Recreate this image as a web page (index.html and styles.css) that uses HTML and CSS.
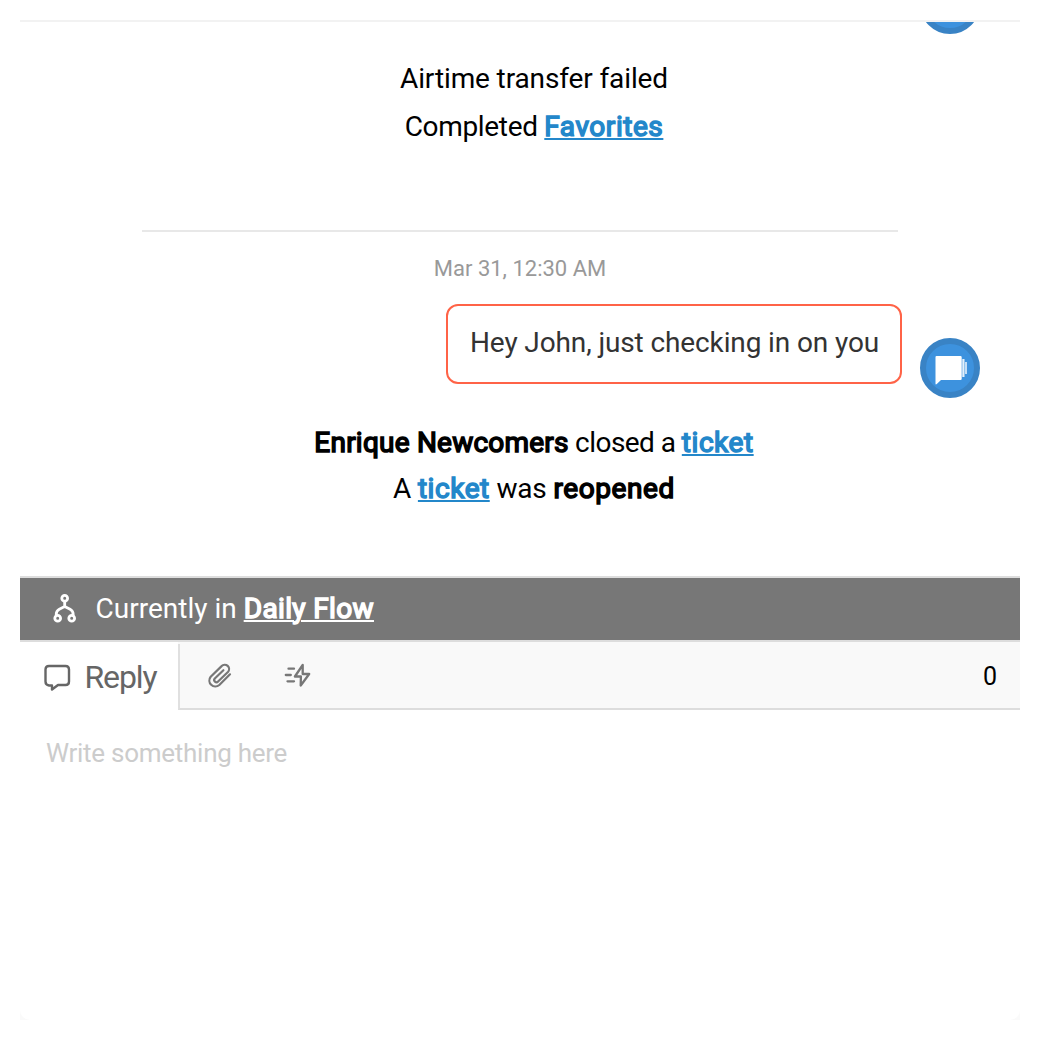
FILE: index.html
```
<!DOCTYPE html>
<html lang="en">
<head>
<meta charset="utf-8">
<title>Chat</title>
<link rel="stylesheet" href="styles.css">
</head>
<body>
<main class="chat">
  <section class="history">
    <div class="avatar avatar-clipped"></div>
    <p class="event failed"><span>Airtime transfer failed</span></p>
    <p class="event completed"><span>Completed <a>Favorites</a></span></p>
    <div class="divider"></div>
    <time class="time">Mar 31, 12:30 AM</time>
    <div class="message">
      <div class="bubble"><span>Hey John, just checking in on you</span></div>
      <div class="avatar">
        <svg viewBox="0 0 60 60" width="60" height="60">
          <path d="M42.300 21h2.200v18h-2.200z" fill="#e4f0fb"/>
          <path d="M44.900 24h2.100v12h-2.100z" fill="#c4def6"/>
          <path d="M15.500 19q0-1 1-1h24q1.200 0 1.200 1.200v21.600q0 1.200-1.200 1.200H21l-4.200 4q-1.300 1-1.300-.500z" fill="#fff"/>
        </svg>
      </div>
    </div>
    <p class="event closed"><span><b>Enrique Newcomers</b> closed a <a>ticket</a></span></p>
    <p class="event reopened"><span>A <a>ticket</a> was <b>reopened</b></span></p>
  </section>
  <section class="flow">
    <svg class="flow-icon" viewBox="0 0 24 30" width="24" height="30" fill="none" stroke="#fff" stroke-width="2.800" stroke-linecap="round">
      <circle cx="11.700" cy="4.300" r="2.900"/><circle cx="4.700" cy="24.300" r="2.900"/><circle cx="18.700" cy="24.300" r="2.900"/>
      <path d="M11.700 8v4.500l-5.400 2.700Q3.200 16.800 3.200 20.500M11.700 12.500l5.400 2.700q3.100 1.600 3.100 5.300"/>
    </svg>
    <span class="flow-text">Currently in <a>Daily Flow</a></span>
  </section>
  <section class="tools">
    <div class="tab">
      <svg viewBox="0 0 28 28" width="28" height="28" fill="none" stroke="#666" stroke-width="2.400" stroke-linejoin="round">
        <path d="M6 2h16.500q3.500 0 3.500 3.500v12q0 3.500-3.500 3.500h-7.500L9 25.500V21.500H6Q2.500 21 2.500 17.500v-12Q2.500 2 6 2z"/>
      </svg>
      <span>Reply</span>
    </div>
    <div class="actions">
      <svg class="clip" viewBox="0 0 26 26" width="26" height="26" fill="none" stroke="#777" stroke-width="2.200" stroke-linecap="round" stroke-linejoin="round">
        <path d="M23 11.300 12.300 22a6 6 0 0 1-8.600-8.300L14.600 3.100a4.300 4.300 0 0 1 6.300 5.900L11.100 18.500a2.200 2.200 0 0 1-3.300-3l8.600-8.300"/>
      </svg>
      <svg class="bolt" viewBox="0 0 28 26" width="28" height="26" fill="none" stroke="#777" stroke-width="2.300" stroke-linecap="round" stroke-linejoin="round">
        <path d="M5.500 5.700h5.500M2.800 12h5M4.500 18.300h6.500M19.700 2 11.900 13.500h6L17.700 22.500l8.500-11.500h-6.500z"/>
      </svg>
      <span class="count">0</span>
    </div>
  </section>
  <section class="compose"><span>Write something here</span></section>
</main>
</body>
</html>
```
FILE: styles.css
```
* { box-sizing: border-box; }
body { margin: 0; padding: 20px; background: #fff; font-family: Roboto, sans-serif; font-size: 28px; color: #000; }
p { margin: 0; }
.chat { width: 1000px; height: 1000px; display: flex; flex-direction: column; background: #fafafa; }
.history { position: relative; height: 556px; border-top: 2px solid #f2f2f2; background: #fff; overflow: hidden; display: flex; flex-direction: column; align-items: center; }
.avatar { width: 60px; height: 60px; border-radius: 50%; border: 6px solid #3983c5; background: #3d92de; flex: none; }
.avatar svg { display: block; margin: -6px; }
.avatar-clipped { position: absolute; right: 40px; top: -48px; }
.event { height: 48px; line-height: 48px; padding-left: 28px; white-space: nowrap; letter-spacing: -0.12px; }
.failed { margin-top: 33px; }
.completed { letter-spacing: -0.32px; }
a { color: #2387ca; text-decoration: underline; text-decoration-thickness: 2px; text-underline-offset: 2px; -webkit-text-stroke: 1.500px currentColor; letter-spacing: 0.55px; }
b { font-weight: 400; -webkit-text-stroke: 1.500px currentColor; letter-spacing: 0.6px; }
.divider { width: 756px; height: 2px; background: #e8e8e8; margin-top: 79px; }
.time { height: 72px; line-height: 73px; font-size: 22px; color: #999; white-space: nowrap; }
.message { align-self: stretch; display: flex; justify-content: flex-end; gap: 18px; padding-right: 40px; height: 94px; align-items: flex-end; }
.bubble { width: 456px; height: 80px; margin-bottom: 14px; border: 2px solid tomato; border-radius: 12px; padding-left: 22px; line-height: 74px; letter-spacing: -0.12px; color: #333; white-space: nowrap; }
.closed { margin-top: 21px; height: 46px; letter-spacing: -0.55px; }
.closed b { letter-spacing: 0.22px; }
.reopened { height: 46px; letter-spacing: -0.2px; }
.flow { height: 66px; border-top: 2px solid #ddd; border-bottom: 2px solid #ddd; background: #777; color: #fff; display: flex; align-items: center; padding-left: 33px; white-space: nowrap; }
.flow a { color: #fff; letter-spacing: 0.36px; }
.flow-text { margin-left: 18.6px; line-height: 60px; }
.tools { height: 68px; display: flex; background: #f9f9f9; }
.tab { width: 158px; background: #fff; display: flex; align-items: center; padding: 2px 0 0 23px; color: #666; font-size: 32px; letter-spacing: -1.1px; }
.tab svg { position: relative; top: 1px; }
.tab span { margin-left: 13.5px; }
.actions { flex: 1; display: flex; align-items: center; border-left: 2px solid #e0e0e0; border-bottom: 2px solid #ddd; margin-top: 2px; padding: 0 23px 0 27px; }
.clip { margin-bottom: 1px; }
.bolt { margin-left: 50px; }
.count { margin-left: auto; font-size: 25px; }
.compose { flex: 1; background: #fff; border-radius: 0 0 10px 10px; padding: 24px 26px; color: #ccc; font-size: 26px; letter-spacing: -0.27px; line-height: 38px; }
```
